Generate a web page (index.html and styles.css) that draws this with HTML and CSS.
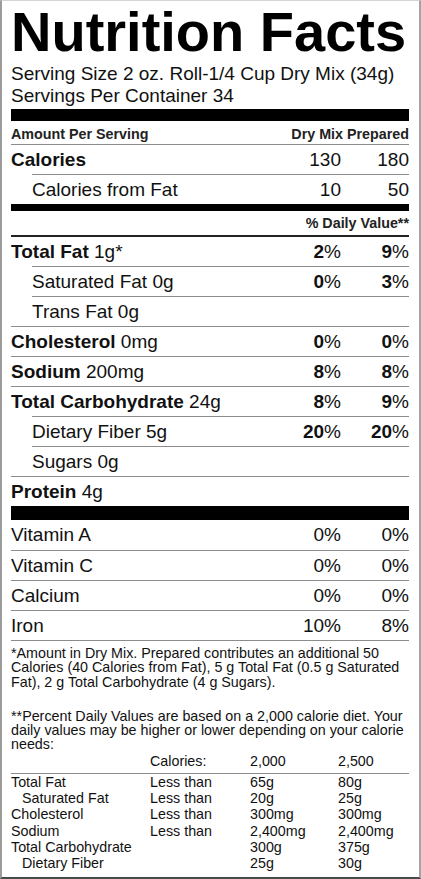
FILE: index.html
```html
<!doctype html>
<html lang="en">
  <head>
    <meta charset="UTF-8" />
    <meta name="viewport" content="width=device-width, initial-scale=1.0"/>
    <title>Nutrition Facts</title>
    <link rel="stylesheet" href="styles.css">
  </head>
  <body>
    <div class="label">
      <h1 class="title">Nutrition Facts</h1>
      <div class="serving">
        Serving Size 2 oz. Roll-1/4 Cup Dry Mix (34g)<br>
        Servings Per Container 34
      </div>
      <div class="bar bar-lg"></div>

      <div class="head">
        <span class="name">Amount Per Serving</span>
        <span class="col">Dry Mix</span>
        <span class="col">Prepared</span>
      </div>
      <div class="row">
        <span class="name"><b>Calories</b></span>
        <span class="col">130</span>
        <span class="col">180</span>
      </div>
      <div class="row sub">
        <span class="name">Calories from Fat</span>
        <span class="col">10</span>
        <span class="col">50</span>
      </div>
      <div class="bar bar-md"></div>
      <div class="dv">% Daily Value**</div>

      <div class="nutrients">
        <div class="row">
          <span class="name"><b>Total Fat</b> 1g*</span>
          <span class="col"><b>2</b>%</span>
          <span class="col"><b>9</b>%</span>
        </div>
        <div class="row sub">
          <span class="name">Saturated Fat 0g</span>
          <span class="col"><b>0</b>%</span>
          <span class="col"><b>3</b>%</span>
        </div>
        <div class="row sub">
          <span class="name">Trans Fat 0g</span>
        </div>
        <div class="row">
          <span class="name"><b>Cholesterol</b> 0mg</span>
          <span class="col"><b>0</b>%</span>
          <span class="col"><b>0</b>%</span>
        </div>
        <div class="row">
          <span class="name"><b>Sodium</b> 200mg</span>
          <span class="col"><b>8</b>%</span>
          <span class="col"><b>8</b>%</span>
        </div>
        <div class="row">
          <span class="name"><b>Total Carbohydrate</b> 24g</span>
          <span class="col"><b>8</b>%</span>
          <span class="col"><b>9</b>%</span>
        </div>
        <div class="row sub">
          <span class="name">Dietary Fiber 5g</span>
          <span class="col"><b>20</b>%</span>
          <span class="col"><b>20</b>%</span>
        </div>
        <div class="row sub">
          <span class="name">Sugars 0g</span>
        </div>
        <div class="row">
          <span class="name"><b>Protein</b> 4g</span>
        </div>
      </div>
      <div class="bar bar-lg bar-vit"></div>

      <div class="vitamins">
        <div class="row">
          <span class="name">Vitamin A</span>
          <span class="col">0%</span>
          <span class="col">0%</span>
        </div>
        <div class="row">
          <span class="name">Vitamin C</span>
          <span class="col">0%</span>
          <span class="col">0%</span>
        </div>
        <div class="row">
          <span class="name">Calcium</span>
          <span class="col">0%</span>
          <span class="col">0%</span>
        </div>
        <div class="row">
          <span class="name">Iron</span>
          <span class="col">10%</span>
          <span class="col">8%</span>
        </div>
      </div>

      <div class="notes">
        <p>*Amount in Dry Mix. Prepared contributes an additional 50<br>
        Calories (40 Calories from Fat), 5 g Total Fat (0.5 g Saturated<br>
        Fat), 2 g Total Carbohydrate (4 g Sugars).</p>
        <p>**Percent Daily Values are based on a 2,000 calorie diet. Your<br>
        daily values may be higher or lower depending on your calorie<br>
        needs:</p>
      </div>

      <div class="dv-table">
        <div class="dv-head">
          <span></span>
          <span>Calories:</span>
          <span>2,000</span>
          <span>2,500</span>
        </div>
        <div class="dv-body">
          <span>Total Fat</span><span>Less than</span><span>65g</span><span>80g</span>
          <span class="indent">Saturated Fat</span><span>Less than</span><span>20g</span><span>25g</span>
          <span>Cholesterol</span><span>Less than</span><span>300mg</span><span>300mg</span>
          <span>Sodium</span><span>Less than</span><span>2,400mg</span><span>2,400mg</span>
          <span>Total Carbohydrate</span><span></span><span>300g</span><span>375g</span>
          <span class="indent">Dietary Fiber</span><span></span><span>25g</span><span>30g</span>
        </div>
      </div>
    </div>
  </body>
</html>
```

FILE: styles.css
```css
body {
  margin: 0;
  font-family: "Liberation Sans", Arial, sans-serif;
  color: #111;
  background: #fff;
}
.label {
  width: 421px;
  height: 879px;
  box-sizing: border-box;
  border-top: 1px solid #d4d4d4;
  border-left: 2px solid #9c9c9c;
  border-right: 2px solid #a4a4a4;
  border-bottom: 2px solid #4a4a4a;
  padding: 0 10px 0 9px;
  overflow: hidden;
}
.title {
  margin: 0;
  font-size: 56px;
  line-height: 62px;
  font-weight: bold;
  color: #000;
}
.serving {
  font-size: 19px;
  line-height: 22px;
}
.bar {
  background: #000;
}
.bar-lg {
  height: 12px;
  margin-top: 2px;
}
.bar-md {
  height: 7px;
}
.bar-vit {
  height: 14px;
  margin-top: 0;
}
.head {
  display: flex;
  padding-top: 4px;
  font-size: 14.3px;
  line-height: 19px;
  font-weight: bold;
  color: #222;
}
.name {
  flex: 1;
}
.col {
  width: 80px;
  text-align: right;
}
.col + .col {
  width: 68px;
}
.head .col {
  width: auto;
}
.head .col + .col {
  width: 66px;
}
.row {
  display: flex;
  border-top: 1px solid #8c8c8c;
  font-size: 19px;
  line-height: 29px;
  height: 29px;
}
.row.sub {
  margin-left: 21px;
}
.dv {
  font-size: 14.3px;
  font-weight: bold;
  line-height: 24px;
  text-align: right;
  color: #222;
}
.nutrients {
  border-top: 1px solid #222;
}
.nutrients .row:first-child {
  border-top: 1px solid #222;
}
.vitamins {
  border-bottom: 1px solid #8c8c8c;
}
.vitamins .row:first-child {
  border-top: none;
  height: 30px;
  line-height: 30px;
}
.notes {
  padding-top: 5px;
  font-size: 14.3px;
  line-height: 14.3px;
}
.notes p {
  margin: 0;
}
.notes p + p {
  margin-top: 20px;
}
.dv-table {
  font-size: 14.3px;
  line-height: 16.2px;
}
.dv-head,
.dv-body {
  display: grid;
  grid-template-columns: 139px 100px 88px auto;
}
.dv-head {
  border-bottom: 1px solid #8c8c8c;
  padding: 1px 0 4px;
}
.indent {
  padding-left: 11px;
}
```
